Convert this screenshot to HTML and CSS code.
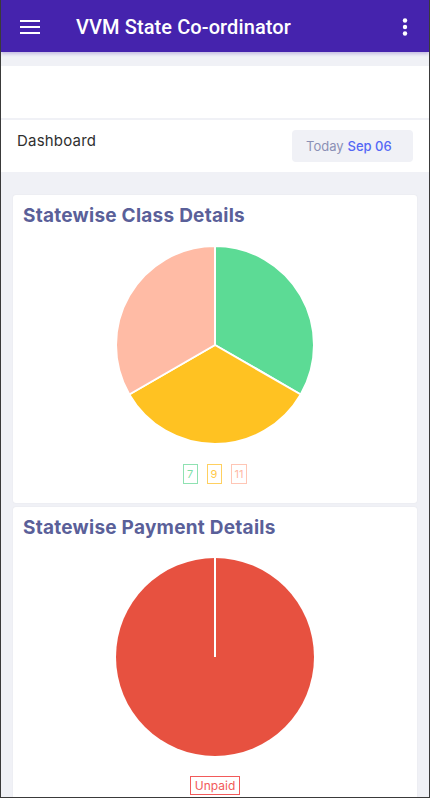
FILE: index.html
```html
<!DOCTYPE html>
<html>
<head>
<meta charset="utf-8">
<link rel="stylesheet" href="styles.css">
</head>
<body>
<div class="app">
  <header class="topbar">
    <svg class="menu" width="20" height="14" viewBox="0 0 20 14"><rect x="0" y="0" width="20" height="2" fill="#fff"/><rect x="0" y="6" width="20" height="2" fill="#fff"/><rect x="0" y="12" width="20" height="2" fill="#fff"/></svg>
    <h1 class="title">VVM State Co-ordinator</h1>
    <svg class="more" width="6" height="18" viewBox="0 0 6 18"><circle cx="3" cy="2.5" r="2.2" fill="#fff"/><circle cx="3" cy="9" r="2.2" fill="#fff"/><circle cx="3" cy="15.5" r="2.2" fill="#fff"/></svg>
  </header>
  <div class="subbar"></div>
  <div class="blank"></div>
  <div class="dash-row">
    <div class="dash-title">Dashboard</div>
    <div class="date-box"><span class="today">Today</span> <span class="date">Sep 06</span></div>
  </div>
  <main class="content">
    <section class="card">
      <h2 class="card-title">Statewise Class Details</h2>
      <svg class="pie" width="200" height="200" viewBox="0 0 200 200">
        <path d="M100 100 L100 1 A99 99 0 0 1 185.74 149.5 Z" fill="#5cdb95" stroke="#fff" stroke-width="2" stroke-linejoin="round"/>
        <path d="M100 100 L185.74 149.5 A99 99 0 0 1 14.26 149.5 Z" fill="#ffc222" stroke="#fff" stroke-width="2" stroke-linejoin="round"/>
        <path d="M100 100 L14.26 149.5 A99 99 0 0 1 100 1 Z" fill="#ffbba5" stroke="#fff" stroke-width="2" stroke-linejoin="round"/>
      </svg>
      <div class="legend">
        <span class="tag tag-green">7</span>
        <span class="tag tag-yellow">9</span>
        <span class="tag tag-salmon">11</span>
      </div>
    </section>
    <section class="card">
      <h2 class="card-title">Statewise Payment Details</h2>
      <svg class="pie" width="200" height="200" viewBox="0 0 200 200">
        <circle cx="100" cy="100" r="99" fill="#e75140"/>
        <line x1="100" y1="100" x2="100" y2="1" stroke="#fff" stroke-width="2"/>
      </svg>
      <div class="legend">
        <span class="tag tag-red">Unpaid</span>
      </div>
    </section>
  </main>
</div>
</body>
</html>
```
FILE: styles.css
```css
* { box-sizing: border-box; }
html, body { margin: 0; padding: 0; background: #fff; }
body { font-family: "Inter", "Noto Sans", sans-serif; }

.app {
  width: 430px;
  height: 798px;
  border: 1px solid #3a3a3a;
  border-top: none;
  overflow: hidden;
  display: flex;
  flex-direction: column;
  background: #f0f1f6;
}

.topbar {
  height: 52px;
  flex: none;
  background: #4523ad;
  display: flex;
  align-items: center;
  padding: 1px 21px 0 19px;
  box-shadow: 0 2px 3px rgba(69, 35, 173, 0.25);
  position: relative;
  z-index: 1;
}
.menu { flex: none; display: block; }
.title {
  margin: 0 0 0 36px;
  font-family: "Roboto", sans-serif;
  font-weight: 500;
  font-size: 20px;
  color: #fff;
  flex: 1;
  letter-spacing: 0.1px;
}
.more { flex: none; display: block; }

.subbar { height: 14px; flex: none; background: #f0f1f6; }
.blank { height: 54px; flex: none; background: #fff; border-bottom: 2px solid #f0f1f6; }

.dash-row {
  height: 52px;
  flex: none;
  background: #fff;
  display: flex;
  justify-content: space-between;
  align-items: flex-start;
  padding: 10px 16px 0 16px;
}
.dash-title {
  font-size: 15px;
  color: #2f2f2f;
  margin-top: 1px;
  letter-spacing: 0.2px;
}
.date-box {
  width: 121px;
  height: 32px;
  border-radius: 4px;
  background: #f0f1f6;
  font-size: 13px;
  display: flex;
  align-items: center;
  padding-left: 14px;
  gap: 4px;
}
.today { color: #8b90b5; }
.date { color: #5468f5; font-weight: 500; }

.content {
  flex: 1;
  padding: 23px 12px 0 12px;
  display: flex;
  flex-direction: column;
  gap: 4px;
}

.card {
  background: #fff;
  border-radius: 3px;
  box-shadow: 0 0 2px rgba(0, 0, 0, 0.06);
  padding: 9px 10px 19px 10px;
  display: flex;
  flex-direction: column;
  align-items: center;
  flex: none;
}
.card-title {
  align-self: stretch;
  margin: 0;
  font-size: 19px;
  line-height: 24px;
  font-weight: 700;
  color: #5a6099;
  letter-spacing: 0.25px;
}
.pie { display: block; margin-top: 17px; }

.legend {
  margin-top: 19px;
  display: flex;
  gap: 9px;
  justify-content: center;
}
.tag {
  height: 20px;
  min-width: 15px;
  border: 1px solid;
  font-size: 11px;
  line-height: 18px;
  padding: 0 3px;
  text-align: center;
}
.tag-green { color: #7fdfa9; border-color: #8fe2b2; }
.tag-yellow { color: #ffca4a; border-color: #ffd060; }
.tag-salmon { color: #ffb9a5; border-color: #ffc6b5; }
.tag-red { color: #f25a5a; border-color: #f25a5a; font-size: 12px; padding: 0 4px; height: 19px; line-height: 17px; }
```
